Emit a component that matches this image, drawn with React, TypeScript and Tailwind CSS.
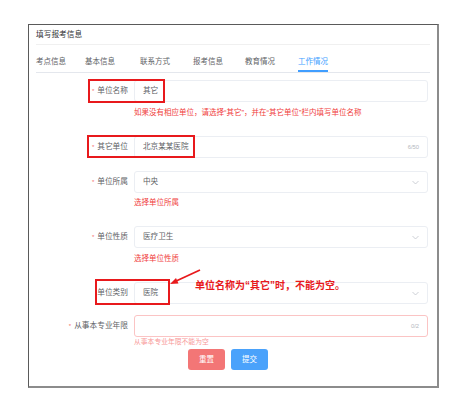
import type { ReactNode } from 'react'

const tabs = [
  { name: '考点信息', w: 'w-[49px]' },
  { name: '基本信息', w: 'w-[55px]' },
  { name: '联系方式', w: 'w-[53px]' },
  { name: '报考信息', w: 'w-[52px]' },
  { name: '教育情况', w: 'w-[53px]' },
  { name: '工作情况', w: 'w-[40px]', active: true },
]

function Chevron() {
  return (
    <svg width="7" height="5" viewBox="0 0 7 5" className="text-[#c0c4cc]">
      <path d="M0.5 1 L3.5 4 L6.5 1" fill="none" stroke="currentColor" strokeWidth="0.8" />
    </svg>
  )
}

interface FieldProps {
  label: string
  required?: boolean
  value?: string
  counter?: string
  select?: boolean
  invalid?: boolean
  children?: ReactNode
}

function Field({ label, required = true, value, counter, select, invalid, children }: FieldProps) {
  return (
    <div className="relative flex h-[22px] items-center">
      <div className="flex w-[98px] shrink-0 items-center justify-end pr-[6px] text-[7.7px] leading-[10px] text-[#606266]">
        {required && <span className="mr-[3px] text-[6px] text-[#f56c6c]">*</span>}
        {label}
      </div>
      <div
        className={`flex h-[22px] w-[294px] items-center justify-between rounded-[3px] border pl-[8px] pr-[8px] ${
          invalid ? 'border-[#fbc4c4]' : 'border-[#ebeef3]'
        }`}
      >
        <span className="text-[7.6px] leading-[10px] text-[#606266]">{value}</span>
        {counter && <span className="text-[5.8px] text-[#b4b7bd]">{counter}</span>}
        {select && <Chevron />}
      </div>
      {children}
    </div>
  )
}

function Err({ text }: { text: string }) {
  return <div className="pl-[98px] text-[7.5px] leading-[12px] text-[#f03c3c]">{text}</div>
}

export default function App() {
  return (
    <div className="h-[396px] w-[476px] overflow-hidden bg-white font-['Liberation_Sans','Noto_Sans_CJK_SC',sans-serif]">
      <div className="ml-[28px] mt-[24px] h-[364px] w-[411px] border border-[#5a5a5a] border-b-2 border-r-2 border-b-[#8c8c8c] border-r-[#8c8c8c] px-[7px]">
        <div className="flex h-[20px] items-center border-b border-[#f0f0f0] text-[7.7px] text-[#303133]">填写报考信息</div>

        <div className="flex border-b border-[#e4e7ed]">
          {tabs.map((t) => (
            <div key={t.name} className={`${t.w} shrink-0`}>
              <span
                className={`inline-block border-b-2 pb-[3px] pt-[12px] text-[7.5px] leading-[10px] ${
                  t.active ? 'border-[#409eff] text-[#409eff]' : 'border-transparent text-[#606266]'
                }`}
              >
                {t.name}
              </span>
            </div>
          ))}
        </div>

        <div className="mt-[7px]">
          <Field label="单位名称" value="其它">
            <div className="absolute left-[52px] top-[-1px] h-[24px] w-[77px] border-2 border-[#e8191c]" />
          </Field>
          <div className="mb-[17px] mt-[5px]">
            <Err text="如果没有相应单位，请选择“其它”，并在“其它单位”栏内填写单位名称" />
          </div>

          <Field label="其它单位" value="北京某某医院" counter="6/50">
            <div className="absolute left-[51px] top-[-1px] h-[23px] w-[108px] border-2 border-[#e8191c]" />
          </Field>
          <div className="mb-[13px]" />

          <Field label="单位所属" value="中央" select />
          <div className="mb-[17px] mt-[4px]">
            <Err text="选择单位所属" />
          </div>

          <Field label="单位性质" value="医疗卫生" select />
          <div className="mb-[17px] mt-[5px]">
            <Err text="选择单位性质" />
          </div>

          <Field label="单位类别" required={false} value="医院" select>
            <div className="absolute left-[59px] top-[-3px] h-[26px] w-[75px] border-2 border-[#e8191c]" />
            <svg className="absolute left-[130px] top-[-14px]" width="40" height="20" viewBox="0 0 40 20">
              <path d="M34 2 L8 14" stroke="#e8191c" strokeWidth="1.8" fill="none" />
              <path d="M4 16 L10 10 L12.5 15.5 Z" fill="#e8191c" />
            </svg>
            <span className="absolute left-[159px] top-[-2px] text-[10px] font-bold leading-[12px] text-[#e8191c]">
              单位名称为“其它”时，不能为空。
            </span>
          </Field>
          <div className="mb-[11px]" />

          <Field label="从事本专业年限" value="" counter="0/2" invalid />
          <div className="mb-[3px] mt-[1px] pl-[98px] text-[6.8px] leading-[8px] text-[#f89898]">从事本专业年限不能为空</div>

          <div className="flex gap-[6px] pl-[152px]">
            <button className="h-[21px] w-[37px] rounded-[3px] bg-[#f37676] text-[7.5px] text-white">重置</button>
            <button className="h-[21px] w-[37px] rounded-[3px] bg-[#4aa2fb] text-[7.5px] text-white">提交</button>
          </div>
        </div>
      </div>
    </div>
  )
}
